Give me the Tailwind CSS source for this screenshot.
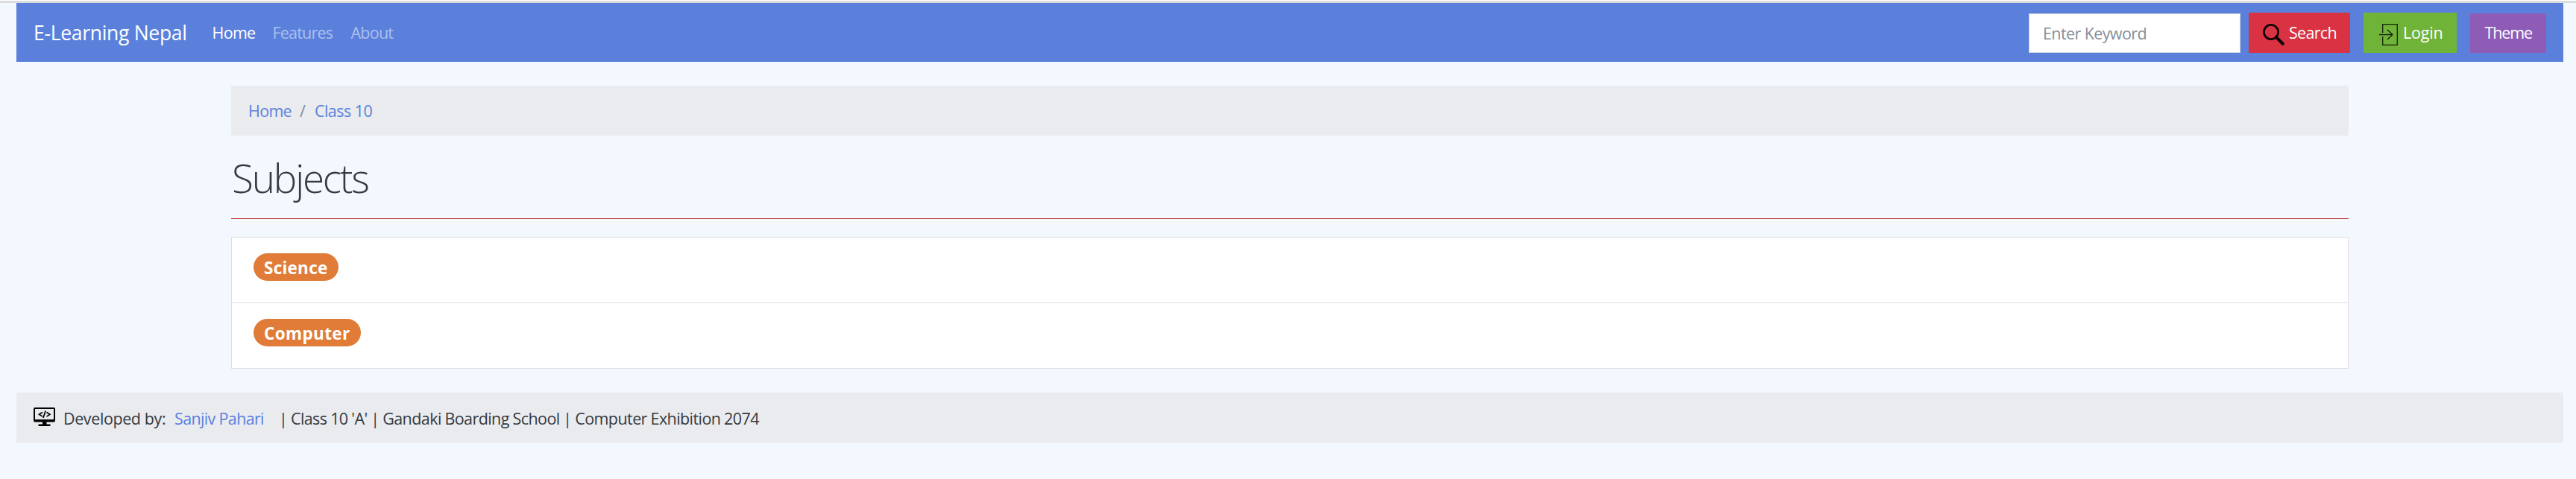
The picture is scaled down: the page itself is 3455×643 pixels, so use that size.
<!DOCTYPE html>
<html lang="en">
<head>
<meta charset="utf-8">
<title>E-Learning Nepal</title>
<script src="https://cdn.jsdelivr.net/npm/@tailwindcss/browser@4"></script>
</head>
<body class="h-[643px] overflow-hidden bg-[#f3f8ff] font-['Open_Sans',sans-serif] text-[21.5px] leading-[30px] text-[#343a40] whitespace-nowrap">
  <div class="h-1 border-t border-white bg-[#dadcdd] bg-clip-padding"></div>
  <nav class="ml-[22px] mr-[17px] flex h-[79px] items-center bg-[#5a80dc] pl-[23px] text-white">
    <a class="w-[239.500px] text-[26.5px] tracking-[-0.3px]">E-Learning Nepal</a>
    <a class="w-[81px] tracking-[-0.7px]">Home</a>
    <a class="w-[105px] tracking-[-0.81px] text-white/50">Features</a>
    <a class="tracking-[-0.75px] text-white/50">About</a>
    <form class="ml-auto mr-[23px] flex items-end">
      <input class="h-[53px] w-[284px] border border-[#ced4da] bg-white pl-[18px] tracking-[-0.6px] outline-none placeholder:text-[#868e96]" placeholder="Enter Keyword">
      <button type="button" class="ml-[11px] flex h-[54px] w-[136px] items-center bg-[#d93242] pl-[19px]">
        <svg class="mt-[5px] h-[29px] w-[29px]" viewBox="0 0 29 29" fill="none" stroke="#0d0505"><circle cx="11" cy="11" r="9.6" stroke-width="2.7"/><path d="M18 18l8.700 8.700" stroke-width="4.200" stroke-linecap="round"/></svg>
        <span class="ml-[6px] tracking-[-0.7px]">Search</span>
      </button>
      <button type="button" class="ml-[18px] flex h-[54px] w-[125px] items-center bg-[#70b339] pl-[21px]">
        <svg class="mt-[5px] h-[29px] w-[25px]" viewBox="0 0 25 29" fill="none" stroke="#142308" stroke-width="1.3"><path d="M4.700 12V.7h19.600v27.600H4.700V17M0 14.500h17M11 8l7 6.500-7 6.500"/></svg>
        <span class="ml-[7px] tracking-[-0.2px]">Login</span>
      </button>
      <button type="button" class="ml-[18px] h-[53px] w-[102px] bg-[#8e5bb7] pl-[19.5px] text-left tracking-[-1.1px]">Theme</button>
    </form>
  </nav>
  <main class="ml-[310px] mt-8 w-[2840px]">
    <ol class="flex h-[67px] items-center bg-[#e9ebef] pl-[23px] text-[#5a80dc]">
      <li class="w-[69px] tracking-[-0.7px]">Home</li>
      <li class="w-[20px] text-[#868e96]">/</li>
      <li class="tracking-[-0.55px]">Class 10</li>
    </ol>
    <h1 class="ml-px mt-[24px] text-[53px] font-light leading-[66px] tracking-[-2.2px]">Subjects</h1>
    <hr class="mt-[21px] border-t border-[#c0302b]">
    <ul class="mt-[24px] border border-[#dfdfdf] bg-white">
      <li class="flex h-[88px] items-start border-b border-[#dfdfdf] pl-[29px] pt-[21px]">
        <span class="h-[37px] w-[114px] rounded-full bg-[#e07c37] pl-[14px] text-[22.5px] font-bold leading-[39px] tracking-[0.25px] text-white">Science</span>
      </li>
      <li class="flex h-[87px] items-start pl-[29px] pt-[21px]">
        <span class="h-[37px] w-[144px] rounded-full bg-[#e07c37] pl-[14px] text-[22.5px] font-bold leading-[39px] tracking-[0.36px] text-white">Computer</span>
      </li>
    </ul>
  </main>
  <footer class="ml-[22px] mr-[17px] mt-[32px] flex h-[67px] items-center bg-[#e9ebef] pl-[23px]">
    <svg class="mb-[3px] h-[25px] w-[29px]" viewBox="0 0 29 25" fill="none" stroke="#000"><rect x="1" y="1" width="27" height="17.500" rx="1" stroke-width="2"/><path d="M1 17.600h27" stroke-width="3"/><path d="M12 19h5.500v3.500h5v2.500h-16v-2.500H12z" fill="#000" stroke="none"/><path d="M12 6.500L7.500 9.300l4.500 2.800M17.500 6.500L22 9.300l-4.500 2.800M16 4.500l-3 9.500" stroke-width="1.700"/></svg>
    <span class="ml-[11px] w-[149px] pt-[2px] tracking-[-0.4px]">Developed by:</span>
    <a class="w-[140px] pt-[2px] tracking-[-0.65px] text-[#5a80dc]">Sanjiv Pahari</a>
    <span class="pt-[2px] tracking-[-0.58px] [word-spacing:-0.3px]">| Class 10 'A' | Gandaki Boarding School | Computer Exhibition 2074</span>
  </footer>
</body>
</html>
